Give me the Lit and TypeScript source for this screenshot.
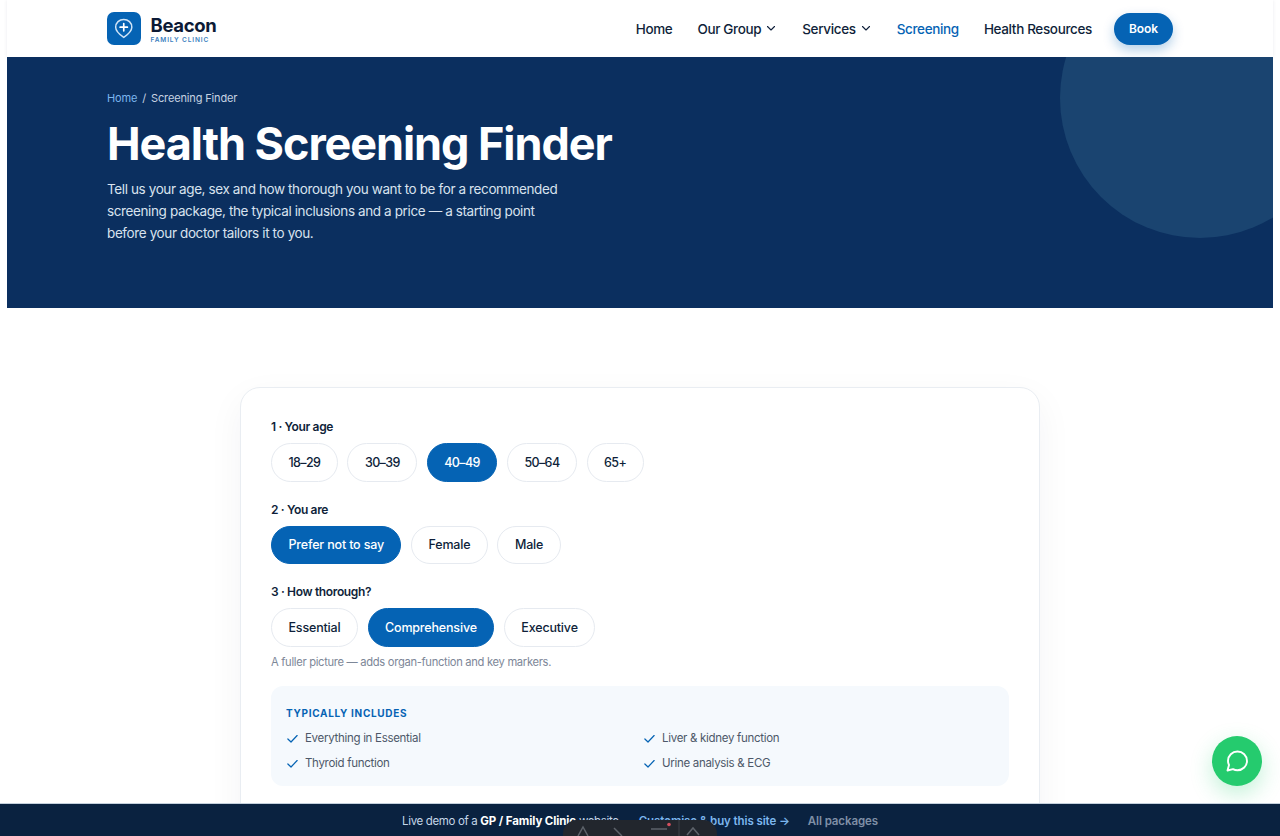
import { LitElement, css, html } from 'lit';
import { customElement } from 'lit/decorators.js';

const chevron = html`<svg class="chev" viewBox="0 0 12 12" fill="none" stroke="currentColor" stroke-width="1.1" stroke-linecap="round" stroke-linejoin="round"><path d="M2.500 4.500 6 8 9.500 4.500"/></svg>`;
const check = html`<svg class="check" viewBox="0 0 14 14" fill="none" stroke="currentColor" stroke-width="1.300" stroke-linecap="round" stroke-linejoin="round"><path d="M2 7.500 5.400 10.800 12 3.800"/></svg>`;

const groups = [
  { label: '1 · Your age', options: ['18–29', '30–39', '40–49', '50–64', '65+'], active: '40–49', tight: true },
  { label: '2 · You are', options: ['Prefer not to say', 'Female', 'Male'], active: 'Prefer not to say', tight: false },
  { label: '3 · How thorough?', options: ['Essential', 'Comprehensive', 'Executive'], active: 'Comprehensive', tight: false },
];

const includes = ['Everything in Essential', 'Liver & kidney function', 'Thyroid function', 'Urine analysis & ECG'];

@customElement('app-root')
export class AppRoot extends LitElement {
  static styles = css`
    :host {
      display: block;
      height: 100vh;
      overflow: hidden;
      position: relative;
      background: #fff;
      font-family: Inter, 'Noto Sans', sans-serif;
      color: #0f1f3a;
    }

    .page {
      margin: 0 7px;
    }

    .top {
      height: 57px;
      padding: 0 100px;
      display: flex;
      align-items: center;
      justify-content: space-between;
      background: #fff;
      box-shadow: 0 0 4px rgba(15, 31, 58, 0.08);
    }

    .brand {
      display: flex;
      align-items: center;
      gap: 10px;
    }

    .logo {
      width: 33.500px;
      height: 33.500px;
      border-radius: 7px;
      background: #0563b4;
      display: block;
    }

    .brand-text {
      display: flex;
      flex-direction: column;
      margin-top: 3px;
    }

    .brand-name {
      font-size: 18.500px;
      line-height: 21px;
      font-weight: 700;
      letter-spacing: -0.350px;
      color: #0c1a35;
    }

    .brand-sub {
      font-size: 6.500px;
      line-height: 9px;
      font-weight: 600;
      letter-spacing: 0.900px;
      color: #3a7fc0;
    }

    nav {
      display: flex;
      align-items: center;
      gap: 25px;
      font-size: 13.500px;
      font-weight: 500;
      letter-spacing: -0.350px;
    }

    nav a {
      display: flex;
      align-items: center;
      gap: 4px;
      color: #0f1f3a;
    }

    nav a.on {
      color: #0563b4;
    }

    .chev {
      width: 12px;
      height: 12px;
      margin-top: -2px;
    }

    nav a.book {
      margin-left: -3px;
      width: 59px;
      height: 32px;
      border-radius: 16px;
      background: #0563b4;
      color: #fff;
      font-size: 12px;
      font-weight: 600;
      letter-spacing: -0.100px;
      justify-content: center;
      box-shadow: 0 5px 12px rgba(5, 99, 180, 0.3);
    }

    .hero {
      position: relative;
      height: 251px;
      box-sizing: border-box;
      padding: 33px 100px 0;
      background: #0b2f5f;
      overflow: hidden;
      color: #fff;
    }

    .hero::after {
      content: '';
      position: absolute;
      left: 1053px;
      top: -99px;
      width: 280px;
      height: 280px;
      border-radius: 50%;
      background: #1a4470;
    }

    .crumbs {
      font-size: 11px;
      line-height: 16px;
      color: #c6d3e2;
      letter-spacing: -0.150px;
    }

    .crumbs span {
      color: #7cb6ee;
    }

    .crumbs i {
      font-style: normal;
      margin: 0 5px;
    }

    h1 {
      margin: 11px 0 0;
      font-size: 45px;
      line-height: 54px;
      font-weight: 700;
      letter-spacing: -1.070px;
    }

    .lead {
      margin: 7px 0 0;
      width: 460px;
      font-size: 13.500px;
      line-height: 22px;
      letter-spacing: -0.385px;
      color: #d8e2ee;
    }

    .card {
      width: 800px;
      box-sizing: border-box;
      margin: 79px auto 0;
      padding: 30px 30px 80px;
      border: 1px solid #e9edf2;
      border-radius: 20px;
      background: #fff;
      box-shadow: 0 12px 36px rgba(15, 31, 58, 0.05);
    }

    .label {
      font-size: 12px;
      line-height: 17px;
      font-weight: 600;
      letter-spacing: -0.350px;
      color: #0f1f3a;
    }

    .pills {
      display: flex;
      gap: 9.500px;
      margin: 8px 0 19px;
    }

    .group.last .pills {
      margin-bottom: 7px;
    }

    .pill {
      height: 38.500px;
      box-sizing: border-box;
      padding: 0 16.500px;
      display: flex;
      align-items: center;
      border: 1px solid #e6eaf0;
      border-radius: 20px;
      font-size: 12.500px;
      font-weight: 500;
      letter-spacing: -0.170px;
      color: #0f1f3a;
    }

    .group.tight .pill {
      letter-spacing: -0.600px;
    }

    .pill.on {
      background: #0563b4;
      border-color: #0563b4;
      color: #fff;
    }

    .hint {
      font-size: 11.200px;
      line-height: 16px;
      letter-spacing: -0.310px;
      color: #7d8798;
    }

    .inc {
      margin-top: 16px;
      height: 100px;
      box-sizing: border-box;
      padding: 20px 15px 0;
      border-radius: 12px;
      background: #f5f9fd;
    }

    .inc-title {
      font-size: 10px;
      line-height: 14px;
      font-weight: 700;
      letter-spacing: 0.700px;
      color: #0563b4;
    }

    .inc-list {
      display: grid;
      grid-template-columns: 1fr 1fr;
      column-gap: 6px;
      row-gap: 7px;
      margin-top: 9.500px;
    }

    .inc-item {
      display: flex;
      align-items: center;
      gap: 6px;
      font-size: 11.500px;
      line-height: 18px;
      letter-spacing: -0.300px;
      color: #4d5869;
    }

    .check {
      width: 13px;
      height: 13px;
      color: #0563b4;
    }

    .chat {
      position: absolute;
      left: 1212px;
      top: 736px;
      width: 50px;
      height: 50px;
      border-radius: 50%;
      background: #25cb6e;
      display: flex;
      align-items: center;
      justify-content: center;
      box-shadow: 0 8px 22px rgba(37, 203, 110, 0.28);
    }

    .chat svg {
      width: 26px;
      height: 26px;
    }

    .bar {
      position: absolute;
      left: 0;
      right: 0;
      bottom: 0;
      height: 33px;
      padding-top: 1px;
      background: #0a2240;
      border-top: 1px solid #c4d0dc;
      box-sizing: border-box;
      display: flex;
      align-items: center;
      justify-content: center;
      gap: 17px;
      font-size: 11.500px;
      letter-spacing: -0.350px;
      color: #c5d6e8;
    }

    .bar b {
      color: #fff;
      font-weight: 700;
      letter-spacing: -0.100px;
    }

    .bar .buy {
      color: #7cb6ee;
      font-weight: 600;
      letter-spacing: -0.100px;
      margin-left: 3px;
    }

    .bar .all {
      color: #7f8fa6;
      font-weight: 600;
      letter-spacing: -0.100px;
      margin-left: 1px;
    }

    .toolbar {
      position: absolute;
      left: 563px;
      top: 820px;
      width: 154px;
      height: 30px;
      border-radius: 14px;
      background: #22262d;
    }

    .toolbar svg {
      display: block;
      width: 154px;
      height: 30px;
    }
  `;

  render() {
    return html`
      <div class="page">
        <header class="top">
          <div class="brand">
            <svg class="logo" viewBox="0 0 34 34" fill="none">
              <path d="M17 7.500c-4.600 0-8.200 3.500-8.200 7.900 0 3.500 4.400 7.700 8.200 10.300 3.800-2.600 8.200-6.800 8.200-10.300 0-4.400-3.600-7.900-8.200-7.900Z" stroke="#cfe3f6" stroke-width="1.500"/>
              <path d="M17 11.700v7.400M13.300 15.400h7.400" stroke="#fff" stroke-width="1.700" stroke-linecap="round"/>
            </svg>
            <div class="brand-text">
              <span class="brand-name">Beacon</span>
              <span class="brand-sub">FAMILY CLINIC</span>
            </div>
          </div>
          <nav>
            <a>Home</a>
            <a>Our Group ${chevron}</a>
            <a>Services ${chevron}</a>
            <a class="on">Screening</a>
            <a>Health Resources</a>
            <a class="book">Book</a>
          </nav>
        </header>

        <section class="hero">
          <div class="crumbs"><span>Home</span><i>/</i>Screening Finder</div>
          <h1>Health Screening Finder</h1>
          <p class="lead">Tell us your age, sex and how thorough you want to be for a recommended screening package, the typical inclusions and a price — a starting point before your doctor tailors it to you.</p>
        </section>

        <section class="card">
          ${groups.map(
            (g, i) => html`
              <div class="group ${g.tight ? 'tight' : ''} ${i === groups.length - 1 ? 'last' : ''}">
                <div class="label">${g.label}</div>
                <div class="pills">
                  ${g.options.map((o) => html`<span class="pill ${o === g.active ? 'on' : ''}">${o}</span>`)}
                </div>
              </div>
            `
          )}
          <div class="hint">A fuller picture — adds organ-function and key markers.</div>
          <div class="inc">
            <div class="inc-title">TYPICALLY INCLUDES</div>
            <div class="inc-list">
              ${includes.map((i) => html`<div class="inc-item">${check}<span>${i}</span></div>`)}
            </div>
          </div>
        </section>
      </div>

      <div class="chat">
        <svg viewBox="0 0 26 26" fill="none" stroke="#fff" stroke-width="1.900" stroke-linejoin="round">
          <path d="M13.500 3.500c-5.300 0-9.500 4.100-9.500 9.300 0 1.500.4 3 1 4.200L3.500 22.500l5.500-1.400c1.400.8 2.900 1.200 4.500 1.200 5.200 0 9.500-4.200 9.500-9.400s-4.300-9.400-9.500-9.400Z"/>
        </svg>
      </div>

      <div class="bar">
        <span>Live demo of a <b>GP / Family Clinic</b> website</span>
        <span class="buy">Customise &amp; buy this site →</span>
        <span class="all">All packages</span>
      </div>
      <div class="toolbar">
        <svg viewBox="0 0 154 30" fill="none" stroke="#5d626a" stroke-width="1.500">
          <path d="M15 16l5-9 5 9"/>
          <path d="M51 8l8 8"/>
          <path d="M88 9h16"/>
          <circle cx="106" cy="4.500" r="1.800" fill="#d4505f" stroke="none"/>
          <path d="M116 0v16" stroke="#3d4148" stroke-width="1"/>
          <path d="M124 15l6-7 6 7"/>
        </svg>
      </div>
    `;
  }
}
